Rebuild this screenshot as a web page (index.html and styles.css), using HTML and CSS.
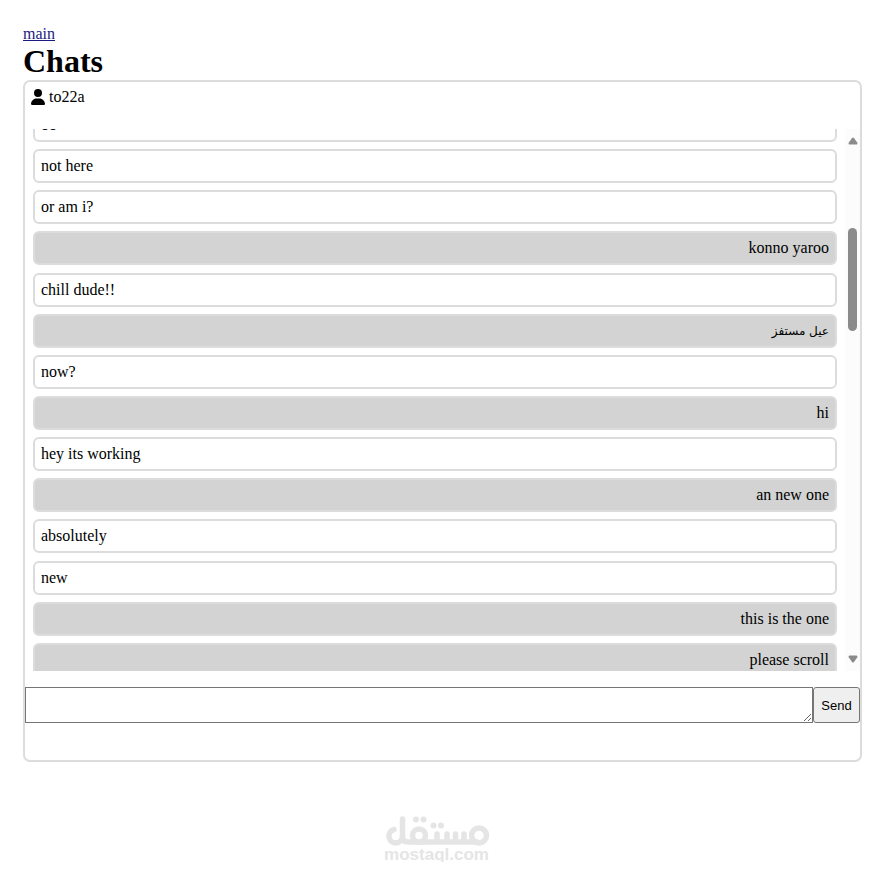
FILE: index.html
```html
<!DOCTYPE html>
<html lang="en">
<head>
    <meta charset="UTF-8">
    <meta name="viewport" content="width=device-width, initial-scale=1.0">
    <title>Chats</title>
    <link rel="stylesheet" href="styles.css">
</head>
<body>

    <a href="#" class="main-link">main</a>
    <h1>Chats</h1>

    <div class="chat-box">
        <!-- Who we are talking to -->
        <div class="chat-user">
            <svg class="user-icon" viewBox="0 0 448 512" aria-hidden="true">
                <path d="M224 256a128 128 0 1 0 0-256 128 128 0 1 0 0 256zM178 304C80 304 0 384 0 482c0 17 13 30 30 30h388c17 0 30-13 30-30 0-98-80-178-178-178z"/>
            </svg>
            <span>to22a</span>
        </div>

        <div class="chat-scroll">
            <div class="messages">
                <p class="message">oo</p>
                <p class="message">not here</p>
                <p class="message">or am i?</p>
                <p class="message mine">konno yaroo</p>
                <p class="message">chill dude!!</p>
                <p class="message mine arabic" lang="ar">عيل مستفز</p>
                <p class="message">now?</p>
                <p class="message mine">hi</p>
                <p class="message">hey its working</p>
                <p class="message mine">an new one</p>
                <p class="message">absolutely</p>
                <p class="message">new</p>
                <p class="message mine">this is the one</p>
                <p class="message mine">please scroll</p>
            </div>
            <div class="scrollbar" aria-hidden="true">
                <svg class="arrow" viewBox="0 0 10 8"><path d="M4 1 Q5 0 6 1 L9.500 6 Q9.500 7.500 8.500 7.500 H1.500 Q0.500 7.500 0.500 6 Z"/></svg>
                <div class="thumb"></div>
                <svg class="arrow arrow-down" viewBox="0 0 10 8"><path d="M4 7 Q5 8 6 7 L9.500 2 Q9.500 0.500 8.500 0.500 H1.500 Q0.500 0.500 0.500 2 Z"/></svg>
            </div>
        </div>

        <form class="send-form">
            <textarea class="send-text" aria-label="Message"></textarea>
            <button type="submit" class="send-btn">Send</button>
        </form>
    </div>

    <!-- Logo -->
    <div class="logo">
        <svg class="logo-mark" viewBox="0 0 106 32" aria-hidden="true">
            <g class="logo-lines">
                <path d="M10 13.500A6.800 6.800 0 1 0 18.500 20V3"/>
                <path d="M18.500 20Q18.500 26 24 26H93"/>
                <circle cx="35" cy="19.500" r="6.500"/>
                <circle cx="95" cy="19.500" r="7.500"/>
                <path d="M53 18V25M63 18V25M71.500 18V25M80 18V25"/>
            </g>
            <g class="logo-dots">
                <circle cx="32" cy="3.500" r="3"/>
                <circle cx="39.500" cy="3.500" r="3"/>
                <circle cx="49.500" cy="9.500" r="3"/>
                <circle cx="57" cy="9.500" r="3"/>
            </g>
        </svg>
        <span class="logo-text">mostaql.com</span>
    </div>

</body>
</html>
```
FILE: styles.css
```css
* {
    box-sizing: border-box;
}

body {
    margin: 25px 11px 0 23px;
    font-family: "Liberation Serif", "Times New Roman", serif;
    font-size: 16px;
    line-height: 18px;
    color: black;
}

.main-link {
    display: block;
    width: fit-content;
    color: #1a1a80;
}

h1 {
    margin: 0;
    font-size: 32px;
    line-height: 37px;
}

/* Chat window */
.chat-box {
    border: 2px solid #dcdcdc;
    border-radius: 7px;
    padding-bottom: 37px;
}

.chat-user {
    display: flex;
    align-items: center;
    gap: 4px;
    height: 47px;
    padding: 0 6px 18px;
}

.user-icon {
    width: 14px;
    height: 16px;
}

/* Messages */
.chat-scroll {
    display: flex;
    height: 542px;
    overflow: hidden;
}

.messages {
    flex: 1;
    display: flex;
    flex-direction: column;
    justify-content: space-between;
    height: 569px;
    margin-top: -21px;
    padding: 0 8px;
}

.message {
    margin: 0;
    padding: 6px;
    border: 2px solid #dcdcdc;
    border-radius: 6px;
}

.mine {
    background: #d3d3d3;
    text-align: right;
}

.arabic {
    font-family: "DejaVu Sans", sans-serif;
    font-size: 12px;
}

.scrollbar {
    display: flex;
    flex-direction: column;
    align-items: center;
    width: 15px;
    padding: 8px 0;
    background: #fcfcfc;
}

.arrow {
    width: 10px;
    height: 8px;
    fill: #8b8b8b;
}

.arrow-down {
    margin-top: auto;
}

.thumb {
    width: 9px;
    height: 103px;
    margin-top: 83px;
    border-radius: 5px;
    background: #8b8b8b;
}

/* Send form */
.send-form {
    display: flex;
    margin-top: 16px;
}

.send-text {
    flex: 1;
    height: 36px;
    border: 1px solid #767676;
}

.send-btn {
    width: 47px;
    padding: 0;
    border: 1px solid #767676;
    border-radius: 3px;
    background: #efefef;
    font-family: "Liberation Sans", Arial, sans-serif;
    font-size: 13px;
}

/* Logo */
.logo {
    display: flex;
    flex-direction: column;
    align-items: center;
    margin: 54px 12px 0 0;
    color: #e5e5e5;
}

.logo-mark {
    width: 106px;
    height: 32px;
}

.logo-lines {
    fill: none;
    stroke: #e5e5e5;
    stroke-width: 5.5;
    stroke-linecap: round;
}

.logo-dots {
    fill: #e5e5e5;
}

.logo-text {
    font-family: "Liberation Sans", Arial, sans-serif;
    font-size: 17px;
    font-weight: bold;
    line-height: 14px;
}
```
